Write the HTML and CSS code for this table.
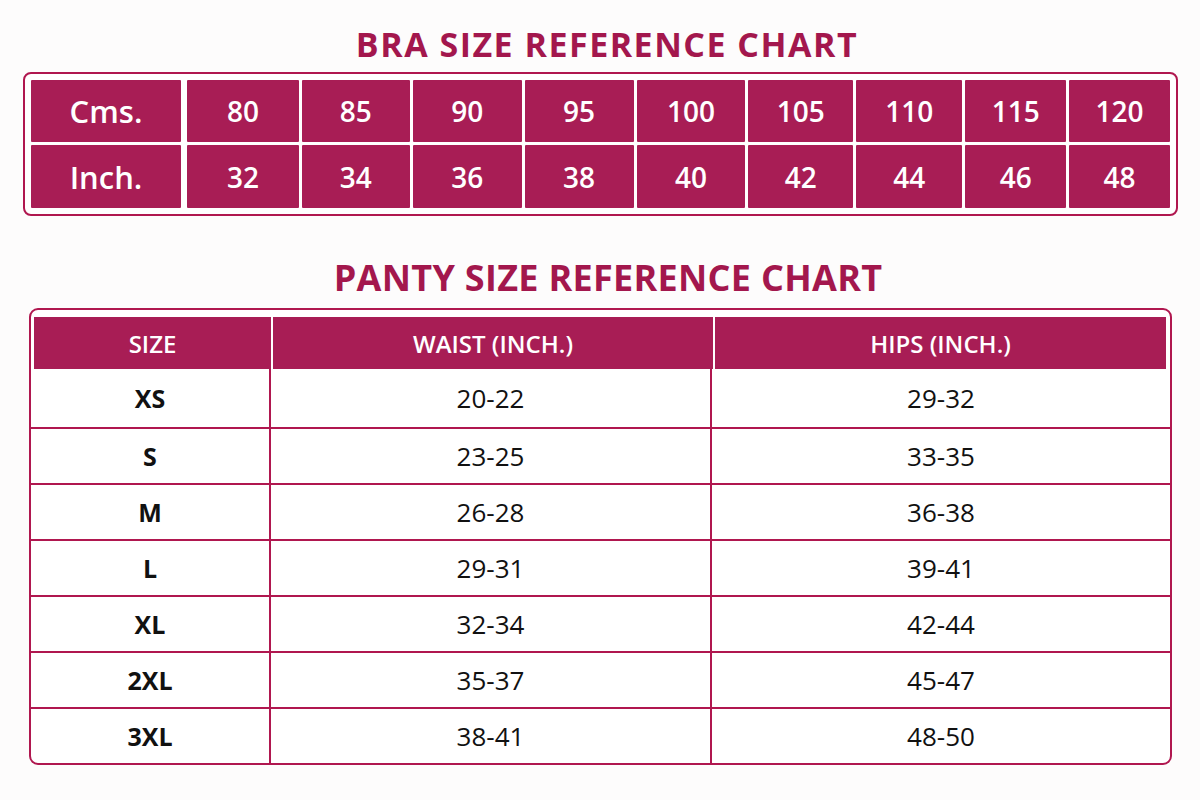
FILE: index.html
```html
<!DOCTYPE html>
<html>
<head>
<meta charset="utf-8">
<link rel="stylesheet" href="styles.css">
</head>
<body>
<div class="page">
  <h1 class="title bra-title">BRA SIZE REFERENCE CHART</h1>
  <div class="bra-box">
    <div class="bra-grid">
      <div class="bcell label">Cms.</div>
      <div class="bcell">80</div><div class="bcell">85</div><div class="bcell">90</div><div class="bcell">95</div>
      <div class="bcell">100</div><div class="bcell">105</div><div class="bcell">110</div><div class="bcell">115</div><div class="bcell">120</div>
      <div class="bcell label">Inch.</div>
      <div class="bcell">32</div><div class="bcell">34</div><div class="bcell">36</div><div class="bcell">38</div>
      <div class="bcell">40</div><div class="bcell">42</div><div class="bcell">44</div><div class="bcell">46</div><div class="bcell">48</div>
    </div>
  </div>

  <h1 class="title panty-title">PANTY SIZE REFERENCE CHART</h1>
  <div class="panty-box">
    <div class="phead-wrap">
      <div class="phead">
        <div class="hcell">SIZE</div>
        <div class="hcell">WAIST (INCH.)</div>
        <div class="hcell">HIPS (INCH.)</div>
      </div>
    </div>
    <div class="prow first"><div class="pcell size">XS</div><div class="pcell">20-22</div><div class="pcell">29-32</div></div>
    <div class="prow"><div class="pcell size">S</div><div class="pcell">23-25</div><div class="pcell">33-35</div></div>
    <div class="prow"><div class="pcell size">M</div><div class="pcell">26-28</div><div class="pcell">36-38</div></div>
    <div class="prow"><div class="pcell size">L</div><div class="pcell">29-31</div><div class="pcell">39-41</div></div>
    <div class="prow"><div class="pcell size">XL</div><div class="pcell">32-34</div><div class="pcell">42-44</div></div>
    <div class="prow"><div class="pcell size">2XL</div><div class="pcell">35-37</div><div class="pcell">45-47</div></div>
    <div class="prow"><div class="pcell size">3XL</div><div class="pcell">38-41</div><div class="pcell">48-50</div></div>
  </div>
</div>
</body>
</html>
```
FILE: styles.css
```css
html, body {
  margin: 0;
  padding: 0;
  background: #fdfcfc;
}
body {
  font-family: "Open Sans", "Noto Sans", sans-serif;
  width: 1200px;
  height: 800px;
  overflow: hidden;
}
.page {
  display: flex;
  flex-direction: column;
}
.title {
  margin: 0;
  text-align: center;
  color: #a3174d;
  font-weight: 700;
}
.bra-title {
  font-size: 34px;
  line-height: 40px;
  letter-spacing: 1.5px;
  margin-top: 24px;
  margin-left: 14px;
  height: 48px;
}
.bra-box {
  margin-left: 23px;
  width: 1155px;
  box-sizing: border-box;
  border: 2px solid #b0174f;
  border-radius: 8px;
  padding: 6px;
  background: #fff;
}
.bra-grid {
  display: grid;
  grid-template-columns: 153px 112fr 108fr 109fr 109fr 109fr 105fr 106fr 101fr 101fr;
  grid-template-rows: 62px 63px;
  column-gap: 3px;
  row-gap: 3px;
}
.bcell {
  background: #a81d55;
  color: #fff;
  font-size: 28px;
  font-weight: 600;
  display: flex;
  align-items: center;
  justify-content: center;
  border-radius: 1px;
}
.bcell.label {
  font-size: 31px;
  margin-right: 3px;
}
.panty-title {
  font-size: 36px;
  line-height: 44px;
  letter-spacing: 0.3px;
  margin-top: 40px;
  margin-left: 16px;
  height: 52px;
}
.panty-box {
  margin-left: 29px;
  width: 1143px;
  box-sizing: border-box;
  border: 2px solid #b0174f;
  border-radius: 9px;
  background: #fff;
  overflow: hidden;
}
.phead-wrap {
  padding: 7px 4px 0 3px;
}
.phead {
  display: grid;
  grid-template-columns: 237px 440px 1fr;
  column-gap: 2px;
  height: 52px;
}
.hcell {
  background: #a81d55;
  color: #fff;
  font-size: 24px;
  font-weight: 600;
  display: flex;
  align-items: center;
  justify-content: center;
}
.prow {
  display: grid;
  grid-template-columns: 240px 441px 1fr;
  height: 56px;
  box-sizing: border-box;
  border-top: 2px solid #b0174f;
}
.prow.first {
  height: 58px;
  border-top: none;
}
.pcell {
  display: flex;
  align-items: center;
  justify-content: center;
  font-size: 26px;
  color: #111;
  border-right: 2px solid #b0174f;
}
.pcell:last-child {
  border-right: none;
}
.pcell.size {
  font-size: 25px;
  font-weight: 700;
}
```
